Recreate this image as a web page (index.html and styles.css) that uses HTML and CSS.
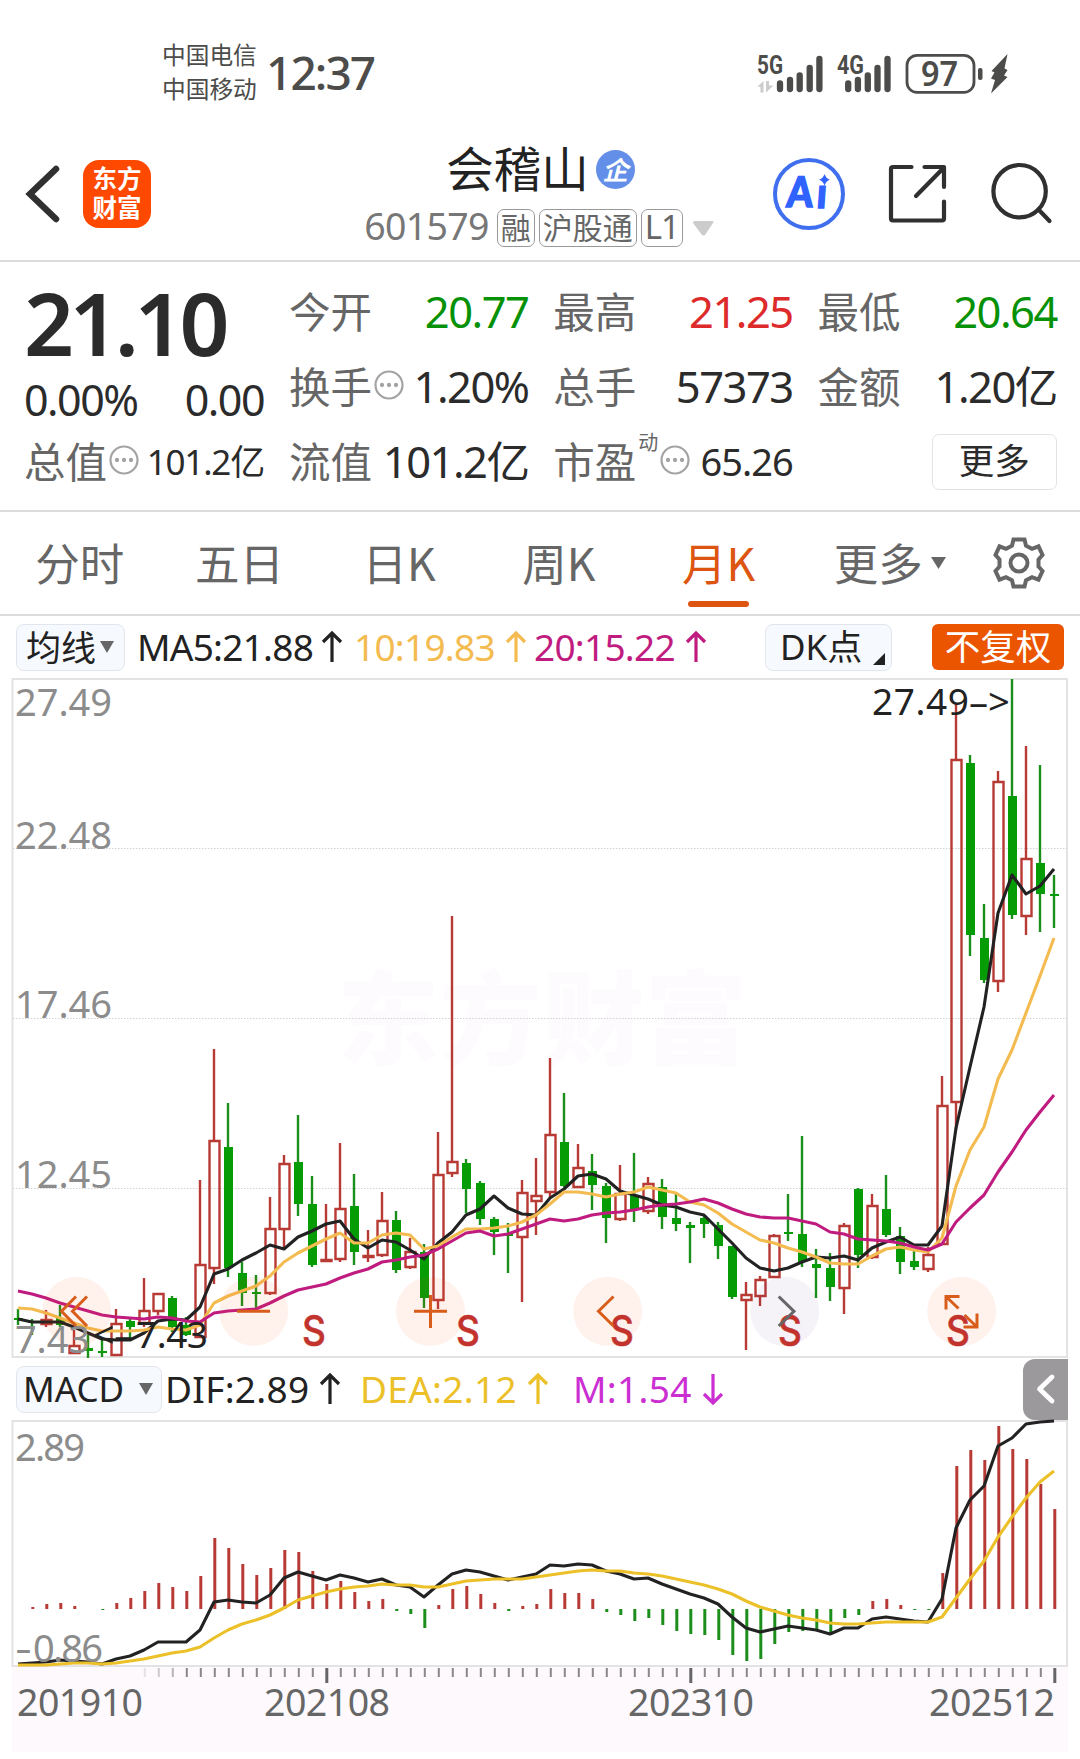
FILE: index.html
```html
<!DOCTYPE html>
<html lang="zh-CN">
<head>
<meta charset="utf-8">
<title>会稽山 601579</title>
<link rel="stylesheet" href="styles.css">
</head>
<body>
<header class="status">
  <div class="carriers"><span>中国电信</span><span>中国移动</span></div>
  <div class="clock">12:37</div>
  <svg class="status-icons" width="256" height="44" viewBox="756 51 256 44">
    <g class="net"><text x="757" y="73" textLength="26" lengthAdjust="spacingAndGlyphs">5G</text><text x="837" y="73" textLength="27" lengthAdjust="spacingAndGlyphs">4G</text></g>
    <path class="updown" d="M757.500 85.500L763.500 80V91.500H760.500V86zM766 80h3v4.500l4.500 0L766 91.500z"/>
    <g class="bars">
      <path d="M780 82.500V88M790 78.800V88M799.700 74.500V88M809.700 67V88M819.400 58V88"/>
      <path d="M848.200 82.500V88M857.900 78.800V88M867.800 74.500V88M877.500 67V88M887.500 58V88"/>
    </g>
    <rect class="battery" x="907" y="54.300" width="67" height="37" rx="10"/>
    <text class="level" x="921" y="85" textLength="37" lengthAdjust="spacingAndGlyphs">97</text>
    <rect class="solid" x="978" y="67" width="4.500" height="12" rx="2"/>
    <path class="solid" d="M1007.500 53L991.500 70l3 1.500-3.500 6 4 1.500-4 13.500L1007.500 76l-3.500-1.500 3.500-5.500-3-1.500z"/>
  </svg>
</header>

<nav class="nav">
  <div class="nav-left">
    <svg width="36" height="60" viewBox="0 0 36 60"><path class="ink" d="M31 5L5 30l26 25"/></svg>
    <div class="logo"><span>东方</span><span>财富</span></div>
  </div>
  <div class="title">
    <div class="name">会稽山<i class="badge">企</i></div>
    <div class="code"><span class="num">601579</span><b>融</b><b>沪股通</b><b class="l1">L1</b><svg width="21" height="15" viewBox="0 0 21 15"><path fill="#ccc" d="M1 0h19q1 1 0 2l-8 12q-1.500 1-3 0L0 2Q0 1 1 0z"/></svg></div>
  </div>
  <div class="nav-right">
    <svg width="74" height="74" viewBox="0 0 74 74">
      <circle cx="37" cy="37" r="34" fill="none" stroke="#3f6fee" stroke-width="4"/>
      <g transform="skewX(-4)">
        <text class="ai" x="17.500" y="50" textLength="26" lengthAdjust="spacingAndGlyphs">A</text>
        <text class="ai" x="47.500" y="51" textLength="10" lengthAdjust="spacingAndGlyphs">ı</text>
      </g>
      <path fill="#2f62ff" d="M52.500 17q1.500 4.500 5.500 5.700-4 1.300-5.500 5.700-1.500-4.400-5.500-5.700 4-1.200 5.500-5.700z"/>
    </svg>
    <svg width="60" height="62" viewBox="886 163.500 60 62"><path class="line" d="M910.500 167.500H892q-2 0-2 2V219q0 2 2 2h49q2 0 2-2V202M923.500 167.500H943V187.500M915 196.500L943 168"/></svg>
    <svg width="62" height="64" viewBox="990 162.500 62 64"><circle class="line" cx="1018.600" cy="191.700" r="26.200"/><path class="line" d="M1037.500 210L1048.500 221.500"/></svg>
  </div>
</nav>

<section class="quote">
  <div class="last">
    <div class="price">21.10</div>
    <div class="change"><span>0.00%</span><span>0.00</span></div>
    <div class="cell small"><label>总值<svg class="info" viewBox="0 0 30 30"><circle cx="15" cy="15" r="13.500"/><path d="M8 15h0M15 15h0M22 15h0"/></svg></label><span>101.2亿</span></div>
  </div>
  <div class="grid">
    <div class="cell"><label>今开</label><span class="down">20.77</span></div>
    <div class="cell"><label>最高</label><span class="up">21.25</span></div>
    <div class="cell"><label>最低</label><span class="down">20.64</span></div>
    <div class="cell"><label>换手<svg class="info" viewBox="0 0 30 30"><circle cx="15" cy="15" r="13.500"/><path d="M8 15h0M15 15h0M22 15h0"/></svg></label><span>1.20%</span></div>
    <div class="cell"><label>总手</label><span>57373</span></div>
    <div class="cell"><label>金额</label><span>1.20亿</span></div>
    <div class="cell"><label>流值</label><span>101.2亿</span></div>
    <div class="cell mid"><label>市盈<sup>动</sup><svg class="info" viewBox="0 0 30 30"><circle cx="15" cy="15" r="13.500"/><path d="M8 15h0M15 15h0M22 15h0"/></svg></label><span>65.26</span></div>
    <div class="cell end"><button class="more">更多</button></div>
  </div>
</section>

<div class="tabs">
  <a>分时</a><a>五日</a><a>日K</a><a>周K</a><a class="active">月K</a><a>更多<svg class="drop" width="15" height="12" viewBox="0 0 15 12"><path fill="#666" d="M0 0h15L7.500 12z"/></svg></a>
  <svg class="gear" width="54" height="54" viewBox="-27 -27 54 54"><path d="M-5.500-23.500H5.500L7-17.300L13-14.200L19.500-16.700L23.500-8L19.500-3.500V3.500L23.500 8L19.500 16.700L13 14.200L7 17.300L5.500 23.500H-5.500L-7 17.300L-13 14.200L-19.500 16.700L-23.500 8L-19.500 3.500V-3.500L-23.500-8L-19.500-16.700L-13-14.200L-7-17.300z"/><circle r="8.500"/></svg>
</div>

<div class="legend">
  <button class="pick ma-pick">均线<svg width="14" height="12" viewBox="0 0 14 12"><path fill="#666" d="M0 0h14L7 12z"/></svg></button>
  <span class="item ma5">MA5:21.88<svg class="arr" viewBox="0 0 20 32"><path d="M10 31V2M1 11l9-9 9 9"/></svg></span>
  <span class="item ma10">10:19.83<svg class="arr" viewBox="0 0 20 32"><path d="M10 31V2M1 11l9-9 9 9"/></svg></span>
  <span class="item ma20">20:15.22<svg class="arr" viewBox="0 0 20 32"><path d="M10 31V2M1 11l9-9 9 9"/></svg></span>
  <button class="pick dk">DK点<svg width="12" height="12" viewBox="0 0 12 12"><path fill="#222" d="M12 0v12H0z"/></svg></button>
  <button class="adjust">不复权</button>
</div>

<svg class="kline" width="1080" height="680" viewBox="0 678 1080 680">
  <text class="watermark" x="337" y="1057" textLength="410">东方财富</text>
  <rect class="frame" x="12.500" y="679" width="1054.500" height="678"/>
  <path class="gridline" d="M13 848.500H1067M13 1018.500H1067M13 1188.500H1067"/>
  <g id="candles"></g>
  <g id="averages"></g>
  <g class="pads"><circle cx="76.700" cy="1311.300" r="34.500"/><circle cx="253.700" cy="1311.300" r="34.500"/><circle cx="430.500" cy="1311.300" r="34.500"/><circle cx="607.700" cy="1311.300" r="34.500"/><circle class="off" cx="784.700" cy="1311.300" r="34.500"/><circle cx="961.700" cy="1311.300" r="34.500"/></g>
  <g class="marks"><text x="302" y="1346">S</text><text x="456" y="1346">S</text><text x="610" y="1346">S</text><text x="778" y="1346">S</text><text x="946" y="1346">S</text></g>
  <g class="tools">
    <path d="M76 1296.500L61.500 1311.300L76 1326M87 1296.500L72.500 1311.300L87 1326M237 1311.300H270M414 1311.300H447M430.500 1295V1328M613.500 1296.500L598.500 1311.300L613.500 1326"/>
    <path class="off" d="M778.700 1296.500L794 1311.300L778.700 1326"/>
    <path d="M946 1309.500V1296.500H959.500M946 1296.500L958.500 1308.500M977 1313.500V1327H963.500M977 1327L964.500 1315"/>
  </g>
  <g class="scale">
    <text x="15" y="715.500" textLength="97">27.49</text>
    <text x="15" y="848.500" textLength="97">22.48</text>
    <text x="15" y="1018" textLength="97">17.46</text>
    <text x="15" y="1187.500" textLength="97">12.45</text>
    <text x="15" y="1353" textLength="75">7.43</text>
  </g>
  <g class="extreme"><text x="872" y="715" textLength="97">27.49</text><text x="969" y="715" textLength="41" lengthAdjust="spacingAndGlyphs">–&gt;</text><text x="93" y="1348" textLength="40" lengthAdjust="spacingAndGlyphs">&lt;–</text><text x="136" y="1348" textLength="72">7.43</text></g>
</svg>

<div class="legend macd-row">
  <button class="pick macd-pick">MACD<svg width="14" height="12" viewBox="0 0 14 12"><path fill="#666" d="M0 0h14L7 12z"/></svg></button>
  <span class="item dif">DIF:2.89<svg class="arr" viewBox="0 0 20 32"><path d="M10 31V2M1 11l9-9 9 9"/></svg></span>
  <span class="item dea">DEA:2.12<svg class="arr" viewBox="0 0 20 32"><path d="M10 31V2M1 11l9-9 9 9"/></svg></span>
  <span class="item m">M:1.54<svg class="arr" viewBox="0 0 20 32"><path d="M10 1V30M1 21l9 9 9-9"/></svg></span>
  <button class="collapse"><svg width="20" height="30" viewBox="0 0 20 30"><path d="M16 3L3.500 15L16 27"/></svg></button>
</div>

<svg class="macd" width="1080" height="332" viewBox="0 1420 1080 332">
  <rect class="axis-bg" x="12" y="1667" width="1056" height="85"/>
  <rect class="frame" x="12.500" y="1421" width="1054.500" height="245"/>
  <g id="histogram"></g>
  <g id="signals"></g>
  <g id="ticks"></g>
  <g class="scale"><text x="15" y="1460.500" textLength="70">2.89</text><text x="16" y="1661.500" textLength="15" lengthAdjust="spacingAndGlyphs">–</text><text x="33" y="1661.500" textLength="70">0.86</text></g>
  <g class="dates"><text x="17" y="1716" textLength="126">201910</text><text x="264" y="1716" textLength="126">202108</text><text x="628" y="1716" textLength="126">202310</text><text x="929" y="1716" textLength="126">202512</text></g>
</svg>
<script src="chart.js"></script>
</body>
</html>
```
FILE: styles.css
```css
* { box-sizing: border-box; }
body { margin: 0; width: 1080px; height: 1759px; overflow: hidden; background: #fff; color: #2b2b2b; font-family: "Noto Sans", "Noto Sans CJK SC", sans-serif; }
svg { display: block; flex: none; overflow: visible; }
button { font: inherit; color: inherit; margin: 0; padding: 0; }

.status { height: 136px; padding: 11px 68px 0 162px; display: flex; align-items: center; color: #4c4c4a; }
.carriers { display: flex; flex-direction: column; width: 104px; margin-bottom: 5px; font: 23.700px/34px "Noto Sans CJK SC", sans-serif; }
.clock { font-size: 46px; font-weight: 500; line-height: 60px; margin-bottom: 3px; letter-spacing: -1.900px; }
.status-icons { margin-left: auto; }
.net { font: 700 25px "Roboto", sans-serif; fill: #4c4c4a; }
.updown { fill: #ccc; }
.bars { fill: none; stroke: #4c4c4a; stroke-width: 6.3; stroke-linecap: round; }
.battery { fill: none; stroke: #4c4c4a; stroke-width: 2.8; }
.level { font-size: 34px; font-weight: 600; fill: #4c4c4a; }
.solid { fill: #4c4c4a; }

.nav { height: 126px; padding-bottom: 8px; display: flex; align-items: center; border-bottom: 2px solid #dcdcdc; }
.nav-left { width: 330px; display: flex; align-items: center; padding-left: 25px; gap: 22px; }
.ink { fill: none; stroke: #303030; stroke-width: 6.500; stroke-linecap: round; }
.logo { width: 68px; height: 68px; border-radius: 16px; background: #ff4800; color: #fff; display: flex; flex-direction: column; align-items: center; padding-top: 3px; font: 700 24.500px/29px "Noto Sans CJK SC", sans-serif; }
.title { width: 418px; display: flex; flex-direction: column; align-items: center; margin-top: 8px; }
.name { height: 60px; display: flex; align-items: center; font: 47.500px/58px "Noto Sans CJK SC", sans-serif; color: #222; padding: 0 0 2px 3px; }
.badge { width: 39px; height: 39px; margin: 4px 0 0 7px; border-radius: 50%; background: #648fe8; color: #fff; font: italic 700 26px/37px "Noto Sans CJK SC", sans-serif; text-align: center; }
.code { height: 60px; display: flex; align-items: center; gap: 4px; color: #777; }
.num { font-size: 37.500px; line-height: 56px; margin: -4px 4px 0 0; letter-spacing: -.7px; }
.code b { height: 38px; padding: 0 3px; border: 1.5px solid #999; border-radius: 7px; font: 30px/32px "Noto Sans CJK SC", sans-serif; color: #666; }
.code .l1 { width: 42px; text-align: center; font: 33px/33px "Noto Sans", sans-serif; padding: 0; letter-spacing: -1px; }
.code svg { margin-left: 6px; }
.nav-right { width: 332px; display: flex; align-items: center; padding-left: 23.500px; }
.nav-right svg + svg { margin-left: 41px; }
.nav-right svg + svg + svg { margin-left: 44px; }
.ai { font: 900 42px "Lato", sans-serif; fill: #2f62ff; stroke: #2f62ff; stroke-width: 1.5; }
.line { fill: none; stroke: #303030; stroke-width: 4.200; stroke-linecap: round; stroke-linejoin: round; }

.quote { height: 250px; padding: 12px 23px 0 24px; display: flex; gap: 25px; border-bottom: 2px solid #dcdcdc; }
.last { width: 240px; }
.price { height: 100px; font-size: 87.500px; line-height: 97px; font-weight: 600; letter-spacing: -4.700px; }
.change { height: 50px; display: flex; justify-content: space-between; font-size: 43px; line-height: 51px; letter-spacing: -1.500px; }
.grid { flex: 1; display: grid; grid-template-columns: repeat(3, 239.500px); grid-auto-rows: 75px; column-gap: 24.700px; }
.cell { height: 75px; display: flex; align-items: center; justify-content: space-between; white-space: nowrap; }
.cell label { display: flex; align-items: center; font: 41.500px/73px "Noto Sans CJK SC", sans-serif; height: 75px; padding-bottom: 2px; color: #666; }
.cell span { font-size: 43.500px; letter-spacing: -1.500px; line-height: 75px; }
.small span { font-size: 35px; letter-spacing: -1.200px; }
.mid span { font-size: 38px; letter-spacing: -1px; }
.cell .down { color: #079107; }
.cell .up { color: #dd2a2a; }
.cell sup { font: 20px/20px "Noto Sans CJK SC", sans-serif; margin: -37px 0 0 2px; }
.info { width: 30px; height: 30px; margin: -2px 0 0 2px; fill: none; stroke: #a3a3a3; stroke-width: 2.200; }
.info path { stroke-width: 4.300; stroke-linecap: round; }
.cell.end { justify-content: flex-end; }
.more { width: 125px; height: 56px; border: 1.500px solid #e3e3e3; border-radius: 7px; background: #fff; font: 35.500px/46px "Noto Sans CJK SC", sans-serif; padding-bottom: 6px; }

.tabs { height: 104px; display: flex; align-items: center; border-bottom: 2px solid #dcdcdc; color: #666; }
.tabs a { width: 159.700px; height: 100px; display: flex; align-items: center; justify-content: center; position: relative; font: 44.500px/98px "Noto Sans CJK SC", sans-serif; padding-bottom: 2px; }
.tabs .active { color: #dd5510; }
.tabs .active::after { content: ""; position: absolute; left: 49px; bottom: 6px; width: 61px; height: 6px; border-radius: 3px; background: #dd5510; }
.drop { margin: 2px -23px 0 8px; }
.gear { margin-left: 34px; fill: none; stroke: #666; stroke-width: 4; stroke-linejoin: miter; }

.legend { height: 62px; display: flex; align-items: center; padding: 0 0 0 16px; font-size: 37px; }
.pick { height: 47px; display: flex; align-items: center; border: 1.500px solid #e2e5ec; border-radius: 8px; background: #f6f9fe; color: #222; font: 35px/40px "Noto Sans", "Noto Sans CJK SC", sans-serif; }
.ma-pick { width: 109px; padding: 0 0 3px 9px; gap: 4px; font: 35px/40px "Noto Sans CJK SC", sans-serif; }
.ma-pick svg { margin-top: 3px; }
.item { display: flex; align-items: center; justify-content: flex-start; gap: 11px; line-height: 50px; letter-spacing: -.75px; white-space: nowrap; }
.arr { width: 20px; height: 32px; fill: none; stroke: currentColor; stroke-width: 3.200; }
.ma5 { width: 217px; margin-left: 12px; gap: 9px; color: #222; }
.ma10 { width: 180px; color: #f3bb50; }
.ma20 { width: 231px; color: #c01c80; }
.dk { width: 127px; padding-left: 14px; gap: 11px; }
.dk svg { margin-top: 24px; }
.adjust { width: 132px; height: 46px; margin-left: 40px; border: 0; border-radius: 6px; background: #eb5500; color: #fff; font: 35.500px/40px "Noto Sans CJK SC", sans-serif; padding-bottom: 4px; }
.macd-row .item { letter-spacing: .3px; }
.macd-pick { width: 146px; padding-left: 6px; gap: 15px; }
.dif { width: 195px; margin-left: 3px; color: #222; }
.dea { width: 213px; color: #ecc028; }
.m { color: #cb2fd2; }
.collapse { width: 45px; height: 61px; margin-left: auto; margin-right: 12px; border: 0; border-radius: 12px 0 0 12px; background: #9b999b; display: flex; align-items: center; justify-content: center; }
.collapse path { fill: none; stroke: #fff; stroke-width: 4.800; stroke-linecap: round; stroke-linejoin: round; }

.frame { fill: none; stroke: #e3e3e3; stroke-width: 2; }
.gridline { stroke: #d2d2d2; stroke-width: 1; stroke-dasharray: 1.500 1.500; fill: none; }
.watermark { font: 900 102px "Noto Sans CJK SC", sans-serif; fill: #fefbfe; }
.scale { font-size: 38px; fill: #8c8c8c; }
.extreme { font-size: 37px; fill: #222; }
.dates { font-size: 37.500px; fill: #666; }
.axis-bg { fill: #fdf9fd; }
.pads circle { fill: #ff5014; fill-opacity: .075; }
.pads .off { fill: #502080; fill-opacity: .06; }
.tools path { fill: none; stroke: #d95d1a; stroke-width: 3; }
.tools .off { stroke: #666; }
.marks { font: 500 42px "Inter", sans-serif; fill: #c3332d; stroke: #c3332d; stroke-width: .5; }
.marks text { transform-box: fill-box; transform: scaleX(.88); }
.rise { stroke: #b83a34; stroke-width: 2.400; fill: none; }
.fall { stroke: #1c8e1c; stroke-width: 2.400; fill: none; }
.fall-body { fill: #059c05; }
.bar-up { stroke: #b83a34; stroke-width: 3; }
.bar-down { stroke: #1c8e1c; stroke-width: 3; }
.curve { fill: none; stroke-width: 3.100; stroke-linejoin: round; }
.tick { stroke: #888; stroke-width: 2; }
.tick.major { stroke: #666; stroke-width: 3; }
```
FILE: chart.js
```js
const X0 = 18, STEP = 14;
const x = i => X0 + STEP * i;
const add = (id, markup) => document.getElementById(id).insertAdjacentHTML('beforeend', markup);

// direction, high, low, body top, body bottom
const candles = `g 1309 1325 1318 1320|g 1319 1335 1321 1323|r 1310 1327 1320 1324|g 1305 1327 1318 1325|r 1330 1354 1346 1353|g 1335 1358 1348 1351|g 1338 1357 1351 1353|r 1309 1355 1324 1355|g 1318 1338 1321 1327|r 1278 1327 1311 1323|r 1293 1315 1294 1311|g 1296 1332 1298 1327|g 1317 1336 1325 1335|r 1180 1338 1265 1337|r 1049 1284 1141 1268|g 1103 1277 1147 1268|g 1262 1306 1273 1293|g 1275 1310 1292 1294|r 1197 1295 1229 1293|r 1155 1248 1164 1229|g 1115 1216 1162 1204|g 1176 1267 1204 1265|r 1204 1262 1260 1261|r 1143 1262 1209 1259|g 1174 1265 1206 1252|r 1230 1262 1256 1257|r 1192 1257 1221 1255|g 1211 1273 1220 1270|r 1238 1269 1252 1267|g 1244 1308 1252 1298|r 1132 1309 1175 1300|r 916 1177 1162 1173|g 1159 1213 1163 1189|g 1181 1225 1183 1219|g 1217 1255 1219 1232|g 1223 1273 1234 1236|r 1180 1302 1193 1237|r 1158 1235 1196 1201|r 1058 1197 1135 1192|g 1093 1187 1142 1186|r 1144 1187 1168 1187|g 1154 1210 1171 1185|g 1183 1243 1186 1218|r 1165 1221 1194 1219|g 1153 1222 1195 1210|r 1177 1214 1184 1211|g 1179 1229 1187 1217|g 1193 1231 1218 1224|g 1222 1263 1225 1228|g 1215 1238 1218 1224|g 1222 1259 1225 1246|g 1246 1299 1246 1297|r 1282 1350 1295 1300|r 1276 1306 1280 1296|r 1234 1277 1236 1277|g 1194 1241 1232 1234|g 1136 1267 1234 1262|g 1249 1298 1264 1268|g 1253 1301 1268 1287|r 1223 1314 1226 1288|g 1188 1268 1189 1255|r 1194 1259 1206 1257|g 1175 1237 1209 1235|g 1227 1274 1236 1262|g 1250 1270 1261 1267|r 1247 1272 1255 1269|r 1076 1245 1106 1244|r 703 1130 760 1102|g 755 956 763 935|g 904 983 938 980|r 771 992 782 981|g 679 919 796 915|r 746 935 859 916|g 765 932 863 894|g 875 928 894 896`.split('|').map(s => s.split(' '));

add('candles', candles.map(([d, ...v], i) => {
  const [hi, lo, top, bot] = v.map(Number), c = x(i);
  if (d === 'g') return `<path class="fall" d="M${c} ${hi}V${lo}"/><rect class="fall-body" x="${c - 4}" y="${top}" width="9" height="${bot - top}"/>`;
  return `<path class="rise" d="M${c} ${hi}V${top}M${c} ${bot}V${lo}M${c - 4.500} ${top}h10V${bot}h-10z"/>`;
}).join(''));

const line = (id, color, text) => {
  const pts = text.trim().split(/\s+/).map((y, i) => `${x(i)},${y}`).join(' ');
  add(id, `<polyline class="curve" stroke="${color}" points="${pts}"/>`);
};
line('averages', '#222', `1319 1322 1322 1322 1327 1333 1339 1340 1340 1333 1321 1319 1320 1307 1274 1269 1260 1253 1245 1249 1237 1231 1224 1221 1239 1248 1240 1242 1250 1259 1243 1232 1215 1209 1196 1208 1214 1215 1198 1189 1176 1174 1179 1191 1195 1199 1205 1207 1212 1215 1229 1243 1258 1268 1271 1268 1262 1257 1258 1256 1260 1248 1242 1237 1245 1245 1226 1128 1067 1007 913 875 894 886 869`);
line('averages', '#f3bb50', `1308 1309 1313 1318 1323 1328 1331 1331 1331 1330 1327 1329 1330 1325 1303 1296 1291 1286 1276 1262 1253 1246 1239 1233 1243 1243 1235 1233 1235 1249 1246 1237 1229 1229 1228 1226 1222 1215 1204 1192 1192 1194 1197 1194 1192 1187 1190 1193 1202 1205 1213 1224 1232 1240 1243 1248 1252 1257 1263 1264 1264 1256 1249 1247 1250 1252 1238 1186 1150 1127 1079 1050 1013 976 938`);
line('averages', '#c01c80', `1291 1294 1298 1303 1307 1311 1315 1317 1318 1319 1317 1318 1321 1322 1313 1311 1310 1309 1303 1296 1290 1287 1284 1278 1273 1269 1262 1260 1257 1255 1249 1241 1233 1231 1236 1234 1229 1224 1219 1221 1219 1215 1213 1212 1210 1207 1205 1204 1202 1199 1203 1209 1214 1217 1218 1218 1221 1224 1232 1234 1239 1240 1241 1243 1247 1250 1244 1222 1208 1195 1172 1152 1130 1112 1095`);

const ZERO = 1609;
const bars = `1609 1607 1604 1603 1606 1609 1610 1603 1598 1591 1583 1587 1591 1576 1538 1548 1564 1575 1568 1550 1552 1571 1584 1581 1592 1601 1599 1611 1614 1628 1605 1589 1586 1594 1603 1611 1606 1604 1589 1593 1593 1599 1612 1615 1621 1618 1625 1631 1634 1635 1640 1655 1661 1659 1644 1632 1631 1629 1633 1618 1615 1601 1599 1605 1610 1610 1573 1466 1450 1460 1426 1449 1459 1484 1509`.split(' ').map(Number);
add('histogram', bars.map((y, i) => `<path class="${y > ZERO ? 'bar-down' : 'bar-up'}" d="M${x(i) + .800} ${ZERO}V${y}"/>`).join(''));
line('signals', '#222', `1664 1663 1662 1660 1661 1662 1664 1659 1656 1650 1642 1642 1642 1630 1602 1600 1602 1603 1595 1578 1572 1576 1580 1575 1578 1582 1579 1585 1587 1597 1585 1574 1570 1572 1576 1580 1577 1574 1565 1566 1564 1565 1571 1574 1579 1578 1584 1589 1594 1598 1604 1617 1628 1632 1629 1626 1628 1630 1634 1628 1628 1619 1617 1619 1621 1622 1599 1528 1500 1486 1446 1438 1424 1422 1421`);
line('signals', '#ecc028', `1665 1665 1665 1664 1663 1663 1664 1663 1661 1659 1656 1653 1651 1647 1638 1630 1624 1620 1615 1608 1600 1596 1592 1589 1587 1586 1584 1585 1585 1587 1587 1584 1581 1580 1579 1579 1579 1577 1575 1573 1571 1570 1571 1571 1573 1574 1576 1579 1582 1585 1589 1594 1601 1607 1611 1615 1618 1620 1623 1624 1624 1623 1622 1622 1622 1622 1617 1598 1579 1561 1537 1517 1498 1482 1471`);

for (let i = 9; i < 75; i++) {
  const major = i === 22 || i === 48 || i === 74;
  const fade = i < 12 ? ` opacity="${(i - 8) * .2}"` : '';
  add('ticks', `<path class="tick${major ? ' major' : ''}"${fade} d="M${x(i) + .800} 1668v${major ? 15 : 9}"/>`);
}
```
